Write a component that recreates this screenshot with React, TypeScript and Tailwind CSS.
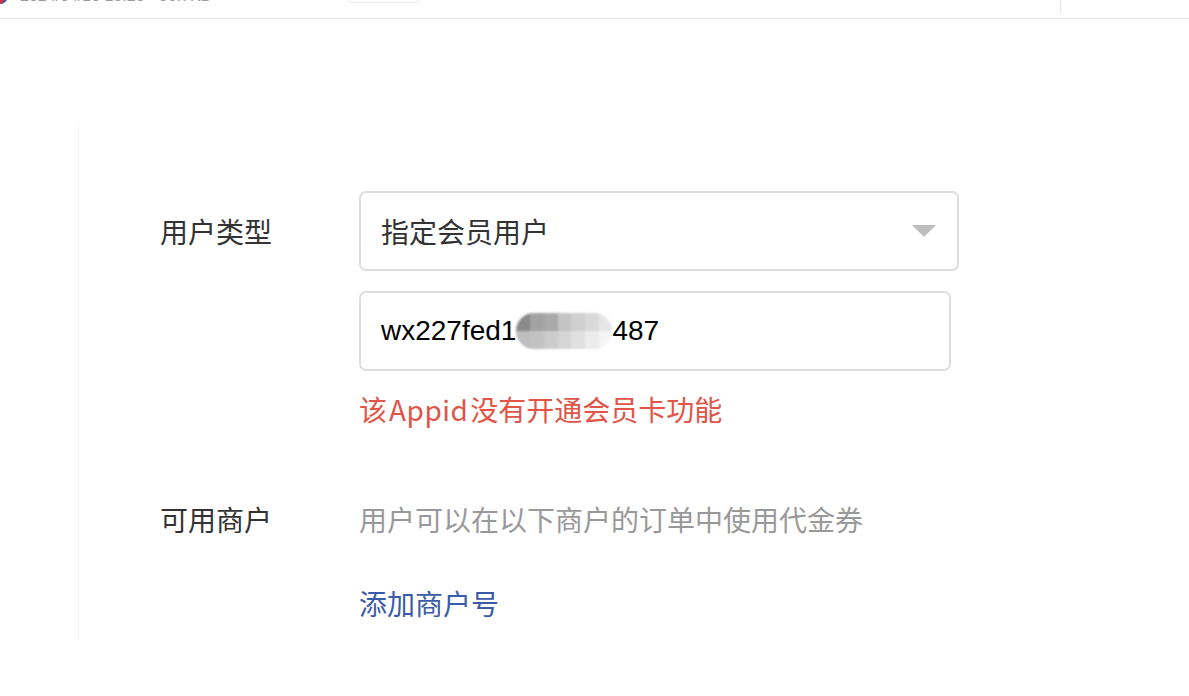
import React from "react";

const cjk = { fontFamily: '"Noto Sans CJK SC", "Noto Sans", sans-serif' };
const latin = { fontFamily: '"Liberation Sans", Arial, "Noto Sans CJK SC", sans-serif' };

function Blur() {
  const cells = [
    "#8a8a8a", "#a3a3a3", "#a9a9a9", "#c4c4c4", "#cfcfcf", "#d9d9d9", "#e6e6e6",
    "#bdbdbd", "#c2c2c2", "#cccccc", "#d5d5d5", "#e0e0e0", "#ececec", "#f4f4f4",
  ];
  return (
    <span className="inline-block align-middle w-[96px] h-[36px] overflow-hidden rounded-[18px] blur-[1px]">
      <span className="grid grid-cols-7 w-full h-full">
        {cells.map((c, i) => (
          <span key={i} style={{ background: c }} />
        ))}
      </span>
    </span>
  );
}

export default function App() {
  return (
    <div className="w-[1189px] h-[696px] bg-white overflow-hidden" style={cjk}>
      {/* top strip */}
      <div className="h-[19px] border-b border-[#e6e6e6] flex overflow-hidden">
        <div className="flex items-start -mt-[12px] h-[31px] flex-1">
          <div className="w-[16px] h-[16px] rounded-full bg-[#d8343a] -ml-[8px] border-r-4 border-[#3b5bb0] shrink-0" />
          <span className="ml-[12px] w-[325px] shrink-0 text-[16px] leading-[16px] text-[#9a9a9a]" style={latin}>
            2024/04/10 15:28 · 36.7KB
          </span>
          <div className="w-[77px] h-[15px] rounded-full border border-[#e8e8e8] shrink-0" />
        </div>
        <div className="w-px h-[14px] bg-[#e6e6e6] mr-[128px]" />
      </div>

      {/* main */}
      <div className="ml-[78px] mt-[106px] h-[515px] border-l border-[#f4f4f4] pl-[81px] pt-[66px]">
        {/* user type row */}
        <div className="flex">
          <div className="w-[199px] h-[80px] flex items-center text-[28px] text-[#333]">用户类型</div>
          <div className="flex flex-col">
            <div className="w-[600px] h-[80px] border-2 border-[#dedede] rounded-[7px] flex items-center justify-between pl-[20px] pr-[20px]">
              <span className="text-[28px] text-[#333]">指定会员用户</span>
              <svg width="26" height="14" viewBox="0 0 26 14">
                <polygon points="1,1 25,1 13,13" fill="#bdbdbd" />
              </svg>
            </div>
            <div className="mt-[20px] w-[592px] h-[80px] border-2 border-[#dedede] rounded-[7px] flex items-center pl-[20px]">
              <span className="text-[28px] text-black leading-none" style={latin}>wx227fed1</span>
              <Blur />
              <span className="text-[28px] text-black leading-none" style={latin}>487</span>
            </div>
            <div className="mt-[18px] h-[40px] leading-[40px] text-[28px] text-[#e05548]">
              该<span className="tracking-[0.5px] mx-[2px]">Appid</span>没有开通会员卡功能
            </div>
          </div>
        </div>

        {/* merchants row */}
        <div className="flex mt-[70px]">
          <div className="w-[199px] h-[40px] leading-[40px] text-[28px] text-[#333]">可用商户</div>
          <div className="flex flex-col">
            <div className="h-[40px] leading-[40px] text-[28px] text-[#999]">用户可以在以下商户的订单中使用代金券</div>
            <div className="mt-[44px] h-[40px] leading-[40px] text-[28px] text-[#3b5ba8]">添加商户号</div>
          </div>
        </div>
      </div>
    </div>
  );
}
